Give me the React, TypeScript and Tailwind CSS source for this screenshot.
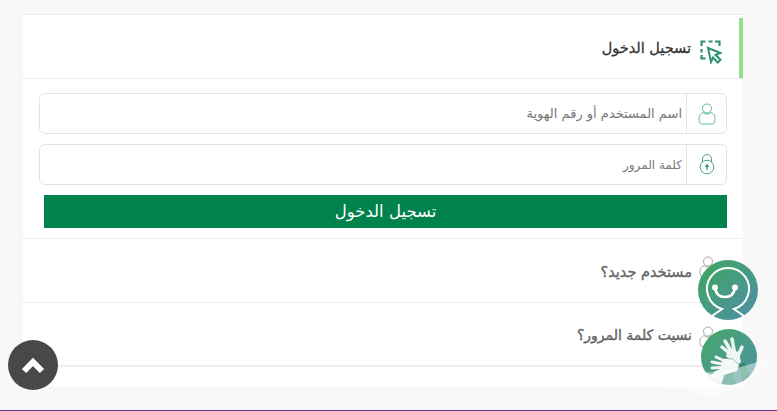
function UserIcon({ color = "#5cb89a" }: { color?: string }) {
  return (
    <svg width="18" height="22" viewBox="0 0 18 22" fill="none" stroke={color} strokeWidth="1">
      <circle cx="9" cy="5.500" r="4.500" />
      <path d="M5 9.500C2.500 10.500 1 12.500 1 15v2.500C1 19.700 2.500 21 4.500 21h9c2 0 3.500-1.300 3.500-3.500V15c0-2.500-1.500-4.500-4-5.500C11.500 11.500 6.500 11.500 5 9.500z" />
    </svg>
  );
}

function LockIcon() {
  return (
    <svg width="16" height="21" viewBox="0 0 16 21" fill="none" stroke="#4aa77f" strokeWidth="1">
      <path d="M3.500 8V5a4.500 4.500 0 0 1 9 0v3" />
      <circle cx="8" cy="13" r="6.800" />
      <circle cx="8" cy="12" r="1.300" fill="#2f8f68" />
      <path d="M8 13v3" strokeWidth="1.400" />
    </svg>
  );
}

function CursorIcon() {
  return (
    <svg width="22" height="24" viewBox="0 0 22 24" fill="none" stroke="#2f9273" strokeWidth="2.200">
      <path d="M1.500 6V1.500h4M8.500 1.500h4M15 1.500h4.500V6M1.500 9v3.500M1.500 15v3.500h4" />
      <path d="M8 8l12.500 5-5 1.800 5 5-2.800 2.700-4.700-5-2 4.500z" fill="#fff" strokeWidth="2" />
    </svg>
  );
}

function SmileBadge() {
  return (
    <svg width="60" height="60" viewBox="0 0 60 60" className="absolute left-[698px] top-[260px]">
      <defs>
        <linearGradient id="chatGrad" x1="0" y1="0" x2="1" y2="1">
          <stop offset="0" stopColor="#3fa65c" />
          <stop offset="1" stopColor="#4f8fa8" />
        </linearGradient>
      </defs>
      <circle cx="30" cy="30" r="30" fill="url(#chatGrad)" />
      <path d="M14 56l10-7A21 21 0 1 1 36 49l10 7" fill="none" stroke="#fff" strokeWidth="2" />
      <path d="M17 28c1 6 5 9 10 9s9-3 10-9" fill="none" stroke="#fff" strokeWidth="2.500" />
      <circle cx="17" cy="27.500" r="3" fill="#fff" />
      <circle cx="37" cy="27.500" r="3" fill="#fff" />
    </svg>
  );
}

function HandsBadge() {
  return (
    <svg width="56" height="56" viewBox="0 0 56 56" className="absolute left-[701px] top-[329px]">
      <defs>
        <linearGradient id="handGrad" x1="0" y1="0" x2="1" y2="1">
          <stop offset="0" stopColor="#45a765" />
          <stop offset="1" stopColor="#4f90a8" />
        </linearGradient>
        <clipPath id="handClip">
          <circle cx="28" cy="28" r="28" />
        </clipPath>
      </defs>
      <circle cx="28" cy="28" r="28" fill="url(#handGrad)" />
      <g clipPath="url(#handClip)">
        <path d="M0 40l10 6 12-2 8 12H0z" fill="#edf5f1" />
        <path d="M24 44l6-4 6 16H20zM38 36l6-3 8 23H42z" fill="#2f8a72" />
        <g fill="none" stroke="#eef6f2" strokeLinecap="round" strokeWidth="3.500">
          <path d="M33 28L21 18M33 27L24 12M34 26L31 10M37 27L41 18" />
        </g>
        <path d="M27 20l11 3 2 10-5 4-10-10z" fill="#eef6f2" />
        <g fill="none" stroke="#f4f9f6" strokeLinecap="round" strokeWidth="3">
          <path d="M26 33L15 28M26 36L11 33M26 38L11 39M24 39L14 44" />
        </g>
        <path d="M21 30l10 0 7 6-2 6-10 3-14 5-4-3 12-7z" fill="#f4f9f6" />
        <path d="M20 29l12 1 6 6" fill="none" stroke="#7fb9a0" strokeWidth="0.800" />
      </g>
    </svg>
  );
}

export default function App() {
  return (
    <div
      dir="rtl"
      className="relative h-[411px] overflow-hidden bg-[#f8f8f8] border-b border-[#6b2d8b] pt-[14px] pr-[34px] pl-[23px]"
      style={{ fontFamily: '"DejaVu Sans", sans-serif' }}
    >
      <div className="flex h-[373px] flex-col bg-white border-t border-[#eeeeee]">
        <div className="relative flex h-[64px] items-center gap-[9px] border-b border-[#eeeeee] pt-[4px] pr-[21px]">
          <div className="absolute right-0 top-[3px] bottom-0 w-[4px] bg-[#93e08a]" />
          <div className="mt-[6px]">
            <CursorIcon />
          </div>
          <span className="text-[14.5px] text-[#333333] [-webkit-text-stroke:0.3px_#333333]">تسجيل الدخول</span>
        </div>
        <div className="flex h-[159px] flex-col pt-[14px] pr-[16px] pl-[16px]">
          <div className="flex h-[41px] items-center rounded-[6px] border border-[#e4e4e4]">
            <div className="flex h-full w-[40px] shrink-0 items-center justify-center border-l border-[#e4e4e4]">
              <UserIcon />
            </div>
            <span className="pr-[4px] text-[13px] text-[#777777]">اسم المستخدم أو رقم الهوية</span>
          </div>
          <div className="mt-[10px] flex h-[41px] items-center rounded-[6px] border border-[#e4e4e4]">
            <div className="flex h-full w-[40px] shrink-0 items-center justify-center border-l border-[#e4e4e4]">
              <LockIcon />
            </div>
            <span className="pr-[4px] text-[12px] text-[#777777]">كلمة المرور</span>
          </div>
          <div className="mt-[10px] ml-[5px] flex h-[33px] items-center justify-center bg-[#00824d] pt-[2px] text-[16.5px] text-white">
            تسجيل الدخول
          </div>
        </div>
        <div className="relative flex h-[64px] items-center border-t border-[#eeeeee] pr-[51px]">
          <div className="absolute right-[26px] top-[17px]">
            <UserIcon color="#a8a8a8" />
          </div>
          <span className="pt-[4px] text-[14.500px] text-[#666666] [-webkit-text-stroke:0.4px_#666666]">مستخدم جديد؟</span>
        </div>
        <div className="relative flex h-[65px] items-center border-t border-b-2 border-[#eeeeee] pr-[51px]">
          <div className="absolute right-[26px] top-[23px]">
            <UserIcon color="#a8a8a8" />
          </div>
          <span className="pt-[3px] text-[14px] text-[#666666] [-webkit-text-stroke:0.4px_#666666]">نسيت كلمة المرور؟</span>
        </div>
      </div>
      <div className="absolute left-[8px] top-[340px] flex h-[50px] w-[50px] items-center justify-center rounded-full bg-[#484848]">
        <svg width="24" height="18" viewBox="0 0 24 18" fill="none" stroke="#ffffff" strokeWidth="6">
          <path d="M3 15l9-9 9 9" />
        </svg>
      </div>
      <SmileBadge />
      <HandsBadge />
      <svg width="137" height="45" viewBox="0 0 137 45" className="absolute left-[640px] top-[357px]" fill="#ffffff" opacity="0.45">
        <path d="M8 20l28-8 28 4 30-4 40-12-22 22-20 10-24 10-20-10-22-2z" />
      </svg>
    </div>
  );
}
